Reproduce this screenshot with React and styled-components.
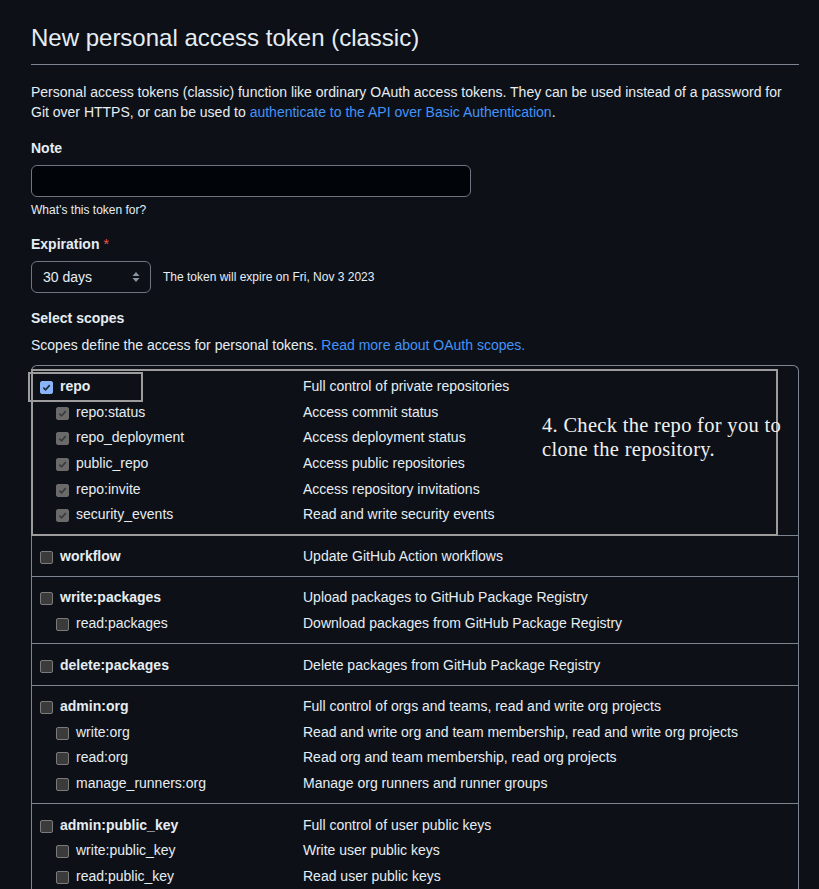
import styled, { createGlobalStyle } from "styled-components";

const GlobalStyle = createGlobalStyle`
  html, body {
    margin: 0;
    padding: 0;
    background: #0d1117;
  }
  body {
    font-family: "Liberation Sans", Arial, sans-serif;
    color: #e6edf3;
    font-size: 14px;
  }
`;

const Page = styled.div`
  width: 768px;
  padding: 23px 0 0 31px;
`;

const Title = styled.h1`
  margin: 0;
  font-size: 24px;
  line-height: 30px;
  font-weight: 400;
  padding-bottom: 11px;
  border-bottom: 1px solid #7d8590;
`;

const Lead = styled.p`
  margin: 17px 0 0;
  line-height: 20px;
`;

const Link = styled.a`
  color: #4493f8;
  text-decoration: none;
`;

const Label = styled.div`
  margin-top: ${(p) => p.$top || 16}px;
  font-weight: 700;
  line-height: 20px;
  .req {
    color: #f85149;
    margin-left: 4px;
    font-weight: 400;
  }
`;

const TextInput = styled.div`
  margin-top: 7px;
  width: 438px;
  height: 30px;
  border: 1px solid #6e7681;
  border-radius: 6px;
  background: #010409;
`;

const Note = styled.div`
  font-size: 12px;
  line-height: 18px;
  margin-top: ${(p) => p.$top || 0}px;
`;

const ExpRow = styled.div`
  margin-top: 7px;
  display: flex;
  align-items: center;
  gap: 12px;
`;

const Select = styled.div`
  width: 120px;
  height: 32px;
  box-sizing: border-box;
  border: 1px solid #6e7681;
  border-radius: 6px;
  display: flex;
  align-items: center;
  justify-content: space-between;
  padding: 0 10px 0 11px;
`;

const Lead2 = styled.p`
  margin: 7px 0 0;
  line-height: 20px;
`;

const Table = styled.div`
  position: relative;
  margin-top: 10px;
  border: 1px solid #7d8590;
  border-bottom: none;
  border-radius: 6px 6px 0 0;
`;

const Group = styled.div`
  padding: 7.5px 0 7.5px 8px;
  & + & {
    border-top: 1px solid #7d8590;
  }
`;

const Row = styled.div`
  display: grid;
  grid-template-columns: ${(p) => (p.$sub ? "247px" : "263px")} 1fr;
  height: 25.6px;
  align-items: center;
  padding-left: ${(p) => (p.$sub ? 16 : 0)}px;
`;

const ScopeName = styled.div`
  display: flex;
  align-items: center;
  gap: 7px;
  font-weight: ${(p) => (p.$sub ? 400 : 700)};
`;

const Box = styled.span`
  width: 13px;
  height: 13px;
  box-sizing: border-box;
  border-radius: 2px;
  margin-top: 3px;
  display: inline-flex;
  align-items: center;
  justify-content: center;
  background: ${(p) =>
    p.$state === "on" ? "#8ab4f8" : p.$state === "dim" ? "#6a6a6a" : "#3b3b3b"};
  border: 1px solid
    ${(p) =>
      p.$state === "on" ? "#8ab4f8" : p.$state === "dim" ? "#6a6a6a" : "#7a7a7a"};
`;

const Frame = styled.div`
  position: absolute;
  box-sizing: border-box;
  border: 2px solid #9c9c9c;
  pointer-events: none;
`;

const BigFrame = styled(Frame)`
  left: -1px;
  top: 3px;
  width: 747px;
  height: 167px;
`;

const SmallFrame = styled(Frame)`
  left: -4px;
  top: 6px;
  width: 115px;
  height: 30px;
`;

const Callout = styled.div`
  position: absolute;
  left: 510px;
  top: 47px;
  font-family: "Liberation Serif", "Times New Roman", serif;
  font-size: 20.5px;
  letter-spacing: 0.3px;
  line-height: 24px;
  color: #f0f0f0;
`;

const Check = ({ color }) => (
  <svg width="9" height="9" viewBox="0 0 10 10">
    <path d="M1.5 5.2 L4 7.6 L8.6 2.4" fill="none" stroke={color} strokeWidth="1.8" />
  </svg>
);

const CheckBox = ({ state }) => (
  <Box $state={state}>
    {state === "on" && <Check color="#1b2a3d" />}
    {state === "dim" && <Check color="#3a3a3a" />}
  </Box>
);

const scopes = [
  {
    name: "repo",
    desc: "Full control of private repositories",
    on: true,
    subs: [
      ["repo:status", "Access commit status"],
      ["repo_deployment", "Access deployment status"],
      ["public_repo", "Access public repositories"],
      ["repo:invite", "Access repository invitations"],
      ["security_events", "Read and write security events"],
    ],
  },
  { name: "workflow", desc: "Update GitHub Action workflows", subs: [] },
  {
    name: "write:packages",
    desc: "Upload packages to GitHub Package Registry",
    subs: [["read:packages", "Download packages from GitHub Package Registry"]],
  },
  { name: "delete:packages", desc: "Delete packages from GitHub Package Registry", subs: [] },
  {
    name: "admin:org",
    desc: "Full control of orgs and teams, read and write org projects",
    subs: [
      ["write:org", "Read and write org and team membership, read and write org projects"],
      ["read:org", "Read org and team membership, read org projects"],
      ["manage_runners:org", "Manage org runners and runner groups"],
    ],
  },
  {
    name: "admin:public_key",
    desc: "Full control of user public keys",
    subs: [
      ["write:public_key", "Write user public keys"],
      ["read:public_key", "Read user public keys"],
    ],
  },
];

const Arrows = () => (
  <svg width="8" height="12" viewBox="0 0 8 12">
    <path d="M4 1 L7.5 5 L0.5 5 Z M4 11 L7.5 7 L0.5 7 Z" fill="#8b949e" />
  </svg>
);

export default function App() {
  return (
    <>
      <GlobalStyle />
      <Page>
        <Title>New personal access token (classic)</Title>
        <Lead>
          Personal access tokens (classic) function like ordinary OAuth access tokens. They can be
          used instead of a password for Git over HTTPS, or can be used to{" "}
          <Link>authenticate to the API over Basic Authentication</Link>.
        </Lead>
        <Label>Note</Label>
        <TextInput />
        <Note $top={4}>What’s this token for?</Note>
        <Label $top={15}>
          Expiration<span className="req">*</span>
        </Label>
        <ExpRow>
          <Select>
            <span>30 days</span>
            <Arrows />
          </Select>
          <Note>The token will expire on Fri, Nov 3 2023</Note>
        </ExpRow>
        <Label $top={15}>Select scopes</Label>
        <Lead2>
          Scopes define the access for personal tokens. <Link>Read more about OAuth scopes.</Link>
        </Lead2>
        <Table>
          {scopes.map((s) => (
            <Group key={s.name}>
              <Row>
                <ScopeName>
                  <CheckBox state={s.on ? "on" : "off"} />
                  {s.name}
                </ScopeName>
                <div>{s.desc}</div>
              </Row>
              {s.subs.map(([n, d]) => (
                <Row $sub key={n}>
                  <ScopeName $sub>
                    <CheckBox state={s.on ? "dim" : "off"} />
                    {n}
                  </ScopeName>
                  <div>{d}</div>
                </Row>
              ))}
            </Group>
          ))}
          <BigFrame />
          <SmallFrame />
          <Callout>
            4. Check the repo for you to
            <br />
            clone the repository.
          </Callout>
        </Table>
      </Page>
    </>
  );
}
